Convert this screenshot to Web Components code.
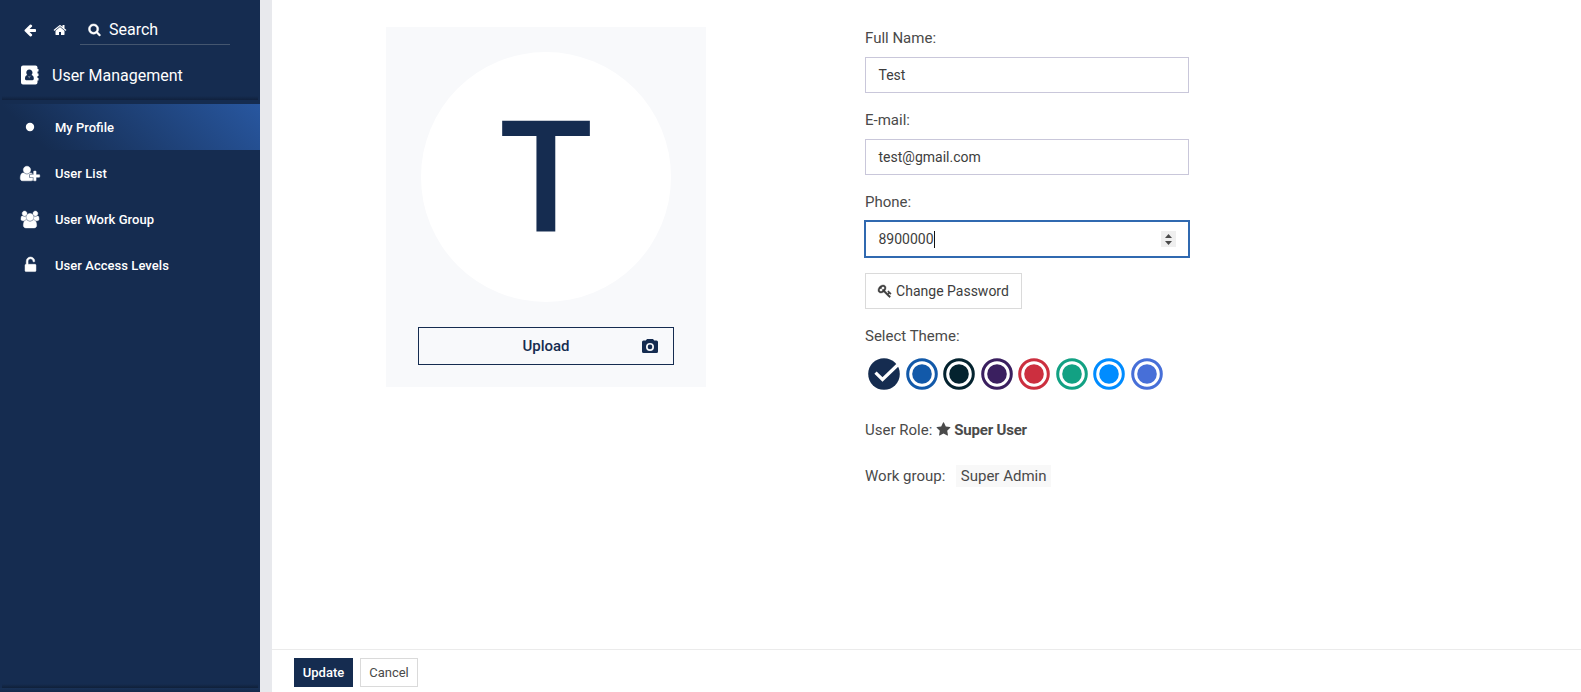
<!DOCTYPE html>
<html lang="en">
<head>
<meta charset="utf-8">
<title>My Profile</title>
<style>
html,body{margin:0;height:100%;overflow:hidden}
body{font-family:Roboto,"Liberation Sans",sans-serif;color:#4a4a4a;background:#fff}
</style>
</head>
<body>
<profile-page></profile-page>
<script>
const ICONS = {
  back:['0 0 1792 1792','<path d="M1664 896v128q0 53-32.5 90.5t-84.5 37.5h-704l293 294q38 36 38 90t-38 90l-75 76q-37 37-90 37-52 0-91-37l-651-652q-37-37-37-90 0-52 37-91l651-650q38-38 91-38 52 0 90 38l75 74q38 38 38 91t-38 91l-293 293h704q52 0 84.5 37.5t32.5 90.5z"/>'],
  home:['0 0 1792 1792','<path d="M1472 992v480q0 26-19 45t-45 19h-384v-384h-256v384h-384q-26 0-45-19t-19-45v-480q0-1 .5-3t.5-3l575-474 575 474q1 2 1 6zm223-69l-62 74q-8 9-21 11h-3q-13 0-21-7l-692-577-692 577q-12 8-24 7-13-2-21-11l-62-74q-8-10-7-23.5t11-21.5l719-599q32-26 76-26t76 26l244 204v-195q0-14 9-23t23-9h192q14 0 23 9t9 23v408l219 182q10 8 11 21.5t-7 23.5z"/>'],
  search:['0 0 1792 1792','<path stroke="currentColor" stroke-width="60" d="M1216 832q0-185-131.5-316.5t-316.5-131.5-316.5 131.5-131.5 316.5 131.5 316.5 316.5 131.5 316.5-131.5 131.5-316.5zm512 832q0 52-38 90t-90 38q-54 0-90-38l-343-342q-179 124-399 124-143 0-273.5-55.5t-225-150-150-225-55.5-273.5 55.5-273.5 150-225 225-150 273.5-55.5 273.5 55.5 225 150 150 225 55.5 273.5q0 220-124 399l343 343q37 37 37 90z"/>'],
  book:['0 0 18 20','<path fill-rule="evenodd" d="M2 .5h12.500a2 2 0 0 1 2 2V4h1v2.500h-1v2h1V11h-1v2h1v2.500h-1v2a2 2 0 0 1-2 2H2a2 2 0 0 1-2-2v-15a2 2 0 0 1 2-2zM8.300 4.500C6.300 4.500 5.300 6 5.300 7.600c0 1 .4 1.900 1 2.500C4.600 10.300 4 12 4 13.800c0 .8.4 1.400 1.200 1.400h6.300c.8 0 1.300-.6 1.300-1.400 0-1.900-.6-3.500-2.300-3.700.6-.6 1-1.500 1-2.500 0-1.600-1.200-3.100-3.200-3.100z"/><path d="M6.500 10.600q1.800 1.200 3.600 0l-1.800 3z" opacity=".35"/>'],
  dot:['0 0 20 20','<circle cx="10" cy="10" r="4.200"/>'],
  userplus:['0 0 2048 1792','<path d="M704 896q-159 0-271.500-112.500t-112.500-271.500 112.500-271.500 271.500-112.500 271.500 112.500 112.500 271.500-112.500 271.500-271.500 112.500zm960 128h352q13 0 22.500 9.500t9.500 22.500v192q0 13-9.500 22.500t-22.500 9.500h-352v352q0 13-9.500 22.500t-22.500 9.500h-192q-13 0-22.500-9.500t-9.500-22.500v-352h-352q-13 0-22.500-9.500t-9.500-22.500v-192q0-13 9.500-22.500t22.500-9.500h352v-352q0-13 9.500-22.500t22.500-9.500h192q13 0 22.500 9.500t9.500 22.500v352zm-736 224q0 52 38 90t90 38h256v238q-68 50-171 50h-874q-121 0-194-69t-73-190q0-53 3.500-103.500t14-109 26.500-108.500 43-97.500 62-81 85.500-53.500 111.500-20q19 0 39 17 79 61 154.500 91.500t164.500 30.500 164.500-30.500 154.500-91.500q20-17 39-17 132 0 217 96h-223q-52 0-90 38t-38 90v192z" stroke="currentColor" stroke-width="50"/>'],
  users:['0 0 1920 1792','<path d="M593 896q-162 5-265 128h-134q-82 0-138-40.500t-56-118.500q0-353 124-353 6 0 43.500 21t97.500 42.500 119 21.500q67 0 133-23-5 37-5 66 0 139 81 256zm1071 637q0 120-73 189.500t-194 69.500h-874q-121 0-194-69.500t-73-189.500q0-53 3.500-103.500t14-109 26.500-108.500 43-97.500 62-81 85.500-53.500 111.500-20q10 0 43 21.500t73 48 107 48 135 21.500 135-21.500 107-48 73-48 43-21.500q61 0 111.500 20t85.500 53.500 62 81 43 97.500 26.500 108.500 14 109 3.500 103.500zm-1024-1277q0 106-75 181t-181 75-181-75-75-181 75-181 181-75 181 75 75 181zm704 384q0 159-112.500 271.500t-271.500 112.500-271.500-112.500-112.500-271.500 112.500-271.500 271.500-112.500 271.500 112.500 112.500 271.500zm576 225q0 78-56 118.500t-138 40.500h-134q-103-123-265-128 81-117 81-256 0-29-5-66 66 23 133 23 59 0 119-21.500t97.500-42.500 43.500-21q124 0 124 353zm-128-609q0 106-75 181t-181 75-181-75-75-181 75-181 181-75 181 75 75 181z" stroke="currentColor" stroke-width="50"/>'],
  unlock:['0 0 1792 1792','<path d="M1376 768q40 0 68 28t28 68v576q0 40-28 68t-68 28h-960q-40 0-68-28t-28-68v-576q0-40 28-68t68-28h32v-320q0-185 131.500-316.500t316.500-131.500 316.500 131.500 131.500 316.500q0 26-19 45t-45 19h-64q-26 0-45-19t-19-45q0-106-75-181t-181-75-181 75-75 181v320h736z" stroke="currentColor" stroke-width="50"/>'],
  key:['0 0 1792 1792','<path stroke="currentColor" stroke-width="50" d="M832 512q0-80-56-136t-136-56-136 56-56 136q0 42 19 83-41-19-83-19-80 0-136 56t-56 136 56 136 136 56 136-56 56-136q0-42-19-83 41 19 83 19 80 0 136-56t56-136zm851 704q0 17-49 66t-66 49q-9 0-28.500-16t-36.500-33-38.500-40-24.500-26l-96 96 220 220q28 28 28 68 0 42-39 81t-81 39q-40 0-68-28l-671-671q-176 131-365 131-163 0-265.500-102.500t-102.500-265.500q0-160 95-313t248-248 313-95q163 0 265.500 102.500t102.500 265.500q0 189-131 365l355 355 96-96q-3-3-26-24.500t-40-38.500-33-36.500-16-28.500q0-17 49-66t66-49q13 0 23 10 6 6 46 44.500t82 79.500 86.500 86 73 78 28.500 41z"/>'],
  star:['0 0 1792 1792','<path d="M1728 647q0 22-26 48l-363 354 86 500q1 7 1 20 0 21-10.500 35.500t-30.500 14.500q-19 0-40-12l-449-236-449 236q-22 12-40 12-21 0-31.500-14.500t-10.500-35.500q0-6 2-20l86-500-364-354q-25-27-25-48 0-37 56-46l502-73 225-455q19-41 49-41t49 41l225 455 502 73q56 9 56 46z"/>'],
  camera:['0 0 16 14','<path fill-rule="evenodd" d="M5 0h6l1.200 1.600H14.500A1.500 1.500 0 0 1 16 3.100v9.400a1.500 1.500 0 0 1-1.500 1.500h-13A1.500 1.500 0 0 1 0 12.500V3.100A1.500 1.500 0 0 1 1.500 1.600h2.300zM8 3.900a4 4 0 1 0 0 8 4 4 0 0 0 0-8z"/><circle cx="8" cy="7.900" r="2.300"/>'],
  ring:['0 0 32 32','<circle cx="16" cy="16" r="14.300" fill="none" stroke="currentColor" stroke-width="3"/><circle cx="16" cy="16" r="9.800"/>'],
  check:['0 0 32 32','<circle cx="16" cy="16" r="15.800"/><path d="M7.500 14.700l7 6.800L29.600 7" fill="none" stroke="#fff" stroke-width="3.200"/>']
};
const define = (tag, css, html) => customElements.define(tag, class extends HTMLElement {
  constructor(){
    super();
    const t = document.createElement('template');
    t.innerHTML = '<style>' + css + '</style>' + html;
    this.attachShadow({mode:'open'}).appendChild(t.content.cloneNode(true));
  }
});
customElements.define('ui-icon', class extends HTMLElement {
  connectedCallback(){
    if (this.shadowRoot) return;
    const [box, art] = ICONS[this.getAttribute('name')];
    const w = this.getAttribute('w'), h = this.getAttribute('h') || w;
    this.attachShadow({mode:'open'}).innerHTML =
      `<style>:host{display:block;flex:none;width:${w}px;height:${h}px}svg{display:block;width:100%;height:100%;fill:currentColor;overflow:visible}</style><svg viewBox="${box}">${art}</svg>`;
  }
});
define('nav-item', `
:host{display:flex;align-items:center;height:46px;color:#fff;font-size:13px;font-weight:500;letter-spacing:.05px}
:host([active]){background:linear-gradient(45deg,#152c50 15%,#2857a0);letter-spacing:0}
.i{width:20px;margin:0 15px 0 20px;display:flex;justify-content:center}`,
`<span class="i"><slot name="icon"></slot></span><slot></slot>`);
define('side-bar', `
:host{display:flex;flex-direction:column;width:260px;background:#152c50;color:#fff;font-size:16px;box-sizing:border-box}
.top{display:flex;align-items:center;height:45px;padding-top:0}
.tools{display:flex;align-items:center;width:80px;padding:15px 0 0 23px;box-sizing:border-box;gap:16px}
.search{display:flex;align-items:center;gap:8px;width:150px;height:30px;margin-top:15px;border-bottom:1px solid #44566f;padding-left:8px;box-sizing:border-box}
.title{display:flex;align-items:center;height:60px;padding-left:21px;gap:13px}
.line{height:4px;margin:-9px 2px 4px;background:linear-gradient(#152c50,#10213e)}
.foot{height:4px;margin:auto 2px 0;background:linear-gradient(#152c50,#0f2039)}
.base{height:4px;background:linear-gradient(#193156,#142a4c)}`,
`<div class="top"><div class="tools"><ui-icon name="back" w="14"></ui-icon><ui-icon name="home" w="14"></ui-icon></div>
<div class="search"><ui-icon name="search" w="13"></ui-icon><span>Search</span></div></div>
<div class="title"><ui-icon name="book" w="18" h="20"></ui-icon><span>User Management</span></div>
<div class="line"></div>
<nav>
<nav-item active><ui-icon slot="icon" name="dot" w="20"></ui-icon>My Profile</nav-item>
<nav-item><ui-icon slot="icon" name="userplus" w="20" h="17"></ui-icon>User List</nav-item>
<nav-item><ui-icon slot="icon" name="users" w="18" h="17"></ui-icon>User Work Group</nav-item>
<nav-item><ui-icon slot="icon" name="unlock" w="17"></ui-icon>User Access Levels</nav-item>
</nav>
<div class="foot"></div><div class="base"></div>`);
define('avatar-card', `
:host{display:flex;flex-direction:column;align-items:center;width:320px;height:360px;background:#f8f9fb;color:#152c50;box-sizing:border-box;padding-top:25px}
.c{width:250px;height:250px;border-radius:50%;background:#fff;display:flex;align-items:center;justify-content:center;font-size:155px;line-height:1;font-weight:500;padding-top:5px;box-sizing:border-box}
.u{display:grid;grid-template-columns:1fr auto 1fr;align-items:center;width:256px;height:38px;border:1px solid #152c50;box-sizing:border-box;margin-top:25px;font-size:15px;font-weight:500}
.u ui-icon{justify-self:end;margin-right:15px}`,
`<div class="c"><slot></slot></div><div class="u"><i></i><span>Upload</span><ui-icon name="camera" w="16" h="14"></ui-icon></div>`);
define('form-field', `
:host{display:block;height:82px;font-size:15px}
.l{line-height:22px;height:30px}
.b{display:flex;align-items:center;height:36px;border:1px solid #c9c7da;box-sizing:border-box;padding:0 12px 0 12.500px;font-size:14px;color:#3d3d3d}
:host([focused]) .b{border-color:#3069b0;box-shadow:0 0 0 1px #3069b0}
.caret,.s{display:none}
:host([focused]) .caret{display:block;width:1px;height:17px;background:#111}
:host([focused]) .s{display:block;width:15px;height:16px;background:#efefef;margin-left:auto}`,
`<div class="l"><slot name="label"></slot></div><div class="b"><slot></slot><i class="caret"></i><svg class="s" viewBox="0 0 15 16"><path d="M4 7l3.500-4L11 7zM4 10h7l-3.500 4z" fill="#4a4a4a"/></svg></div>`);
define('ui-button', `
:host{display:inline-flex;align-items:center;justify-content:center;box-sizing:border-box;border:1px solid #dadada;color:#4a4a4a;font-size:13px;height:29px;width:58px}
:host([primary]){background:#152c50;border-color:#152c50;color:#fff;font-weight:500;width:59px}
:host([wide]){width:157px;height:36px;font-size:14px;gap:4px;color:#3d3d3d}`,
`<slot></slot>`);
define('theme-picker', `
:host{display:flex;gap:5.500px;padding:.5px 0 0 3.300px;height:32px}`,
`<ui-icon name="check" w="32" style="color:#152c50"></ui-icon>` +
['#1259a9','#04232f','#3a1f5f','#cc2f3f','#12a183','#008cff','#476fd8'].map(c=>`<ui-icon name="ring" w="32" style="color:${c}"></ui-icon>`).join(''));
define('profile-form', `
:host{display:block;width:324px;font-size:15px}
.t{line-height:22px;margin-top:16px;height:32px}
.r{display:flex;align-items:center;height:22px;gap:4px}
.role{margin-top:29.500px}.role ui-icon{margin:-1px -1px 0 0}.group{margin-top:24px}
b{font-weight:700;letter-spacing:-.2px}
.tag{background:#f8f8f8;padding:0 4.500px;margin-left:7px;line-height:22px}`,
`<form-field><span slot="label">Full Name:</span>Test</form-field>
<form-field><span slot="label">E-mail:</span>test@gmail.com</form-field>
<form-field focused><span slot="label">Phone:</span>8900000</form-field>
<ui-button wide><ui-icon name="key" w="14"></ui-icon><span>Change Password</span></ui-button>
<div class="t">Select Theme:</div>
<theme-picker></theme-picker>
<div class="r role"><span>User Role:</span><ui-icon name="star" w="15"></ui-icon><b>Super User</b></div>
<div class="r group"><span>Work group:</span><span class="tag">Super Admin</span></div>`);
define('profile-page', `
:host{display:flex;height:692px;width:1581px;background:#e8e9ed}
main{display:flex;flex-direction:column;flex:1;margin-left:12px;background:#fff}
.c{flex:1;display:flex;align-items:flex-start;gap:159px;padding:27px 0 0 114px}
footer{display:flex;gap:7px;height:43px;box-sizing:border-box;border-top:1px solid #ebebeb;padding:8px 0 0 22px}`,
`<side-bar></side-bar><main><div class="c"><avatar-card>T</avatar-card><profile-form></profile-form></div>
<footer><ui-button primary>Update</ui-button><ui-button>Cancel</ui-button></footer></main>`);
</script>
</body>
</html>
